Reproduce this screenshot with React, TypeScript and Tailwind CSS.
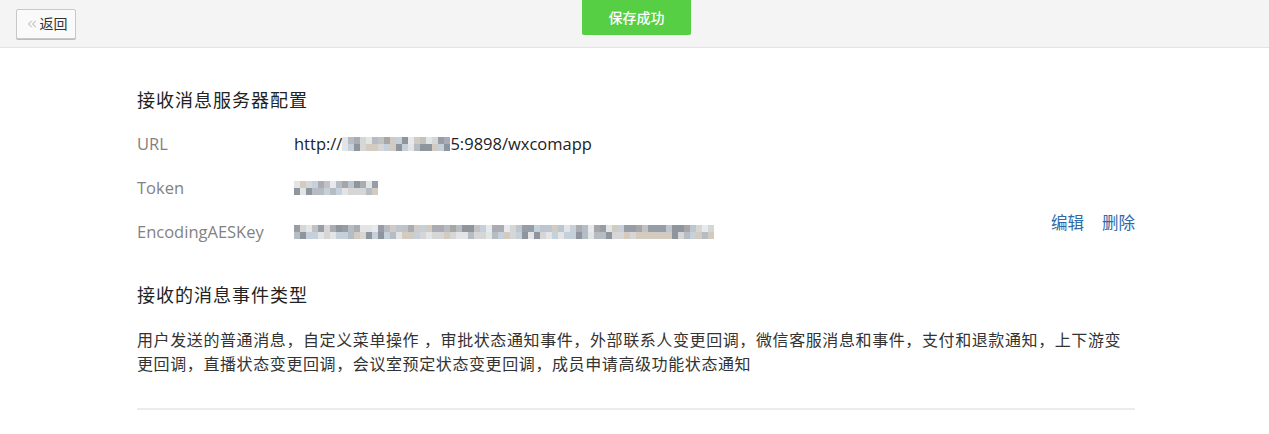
import React from "react";
import { ChevronsLeft } from "lucide-react";

const palette = ["#c2c2c2", "#a9adb3", "#d6d6d6", "#8f959d", "#c6d0da", "#e2e4e6", "#b6bcc3", "#d3cbbf", "#979da6", "#e6e9ed", "#a6a6a6", "#bcc6d1"];

function Mosaic({ cells, seed }: { cells: number; seed: number }) {
  const rows = [0, 1];
  let s = seed;
  const next = () => {
    s = (s * 9301 + 49297) % 233280;
    return s / 233280;
  };
  return (
    <div className="flex flex-col">
      {rows.map((r) => (
        <div key={r} className="flex">
          {Array.from({ length: cells }).map((_, i) => {
            const v = next();
            const col = r === 0 ? palette[Math.floor(v * palette.length)] : palette[Math.floor(v * 6) + 2];
            return <div key={i} className="h-[7px] w-[6px]" style={{ backgroundColor: col }} />;
          })}
        </div>
      ))}
    </div>
  );
}

const cjk = "font-['Open_Sans','Noto_Sans_CJK_SC',sans-serif]";

export default function App() {
  return (
    <div className={`relative h-[434px] w-full overflow-hidden bg-white ${cjk}`}>
      {/* top bar */}
      <div className="flex h-[48px] items-center border-b border-[#dde4eb] bg-[#f4f4f4] pl-[16px]">
        <button className="flex h-[30px] w-[60px] items-center justify-center gap-[1px] rounded-[2px] border border-[#c8c8c8] bg-[#fafafa] text-[14px] text-[#333] shadow-[0_1px_0_#bdbdbd]">
          <ChevronsLeft size={14} strokeWidth={1.2} className="text-[#888]" />
          <span>返回</span>
        </button>
      </div>

      {/* toast */}
      <div className="absolute left-[582px] top-0 flex h-[35px] w-[109px] items-center justify-center rounded-b-[2px] bg-[#56cf44] text-[14px] font-medium text-white">
        保存成功
      </div>

      <div className="ml-[137px] w-[998px] pt-[40px] text-[#222]">
        <h2 className="h-[24px] text-[18px] leading-[24px] tracking-[1px]">接收消息服务器配置</h2>

        <div className="mt-[10px]">
          <div className="flex h-[44px] items-center text-[16.5px]">
            <div className="w-[157px] text-[#828282]">URL</div>
            <div className="flex items-center">
              <span>http://</span>
              <Mosaic cells={18} seed={7} />
              <span>5:9898/wxcomapp</span>
            </div>
          </div>
          <div className="flex h-[44px] items-center text-[16.5px]">
            <div className="w-[157px] text-[#828282]">Token</div>
            <Mosaic cells={14} seed={31} />
          </div>
          <div className="flex h-[44px] items-center text-[16.5px]">
            <div className="w-[157px] text-[#828282]">EncodingAESKey</div>
            <Mosaic cells={70} seed={113} />
            <div className="mb-[18px] ml-auto flex gap-[18px] text-[16.5px] text-[#2f6aa8]">
              <a>编辑</a>
              <a>删除</a>
            </div>
          </div>
        </div>

        <h2 className="mt-[29px] h-[24px] text-[18px] leading-[24px] tracking-[1px]">接收的消息事件类型</h2>

        <p className="mt-[21px] text-[16px] leading-[24px] tracking-[0.6px] text-[#333]">
          用户发送的普通消息，自定义菜单操作 ，审批状态通知事件，外部联系人变更回调，微信客服消息和事件，支付和退款通知，上下游变更回调，直播状态变更回调，会议室预定状态变更回调，成员申请高级功能状态通知
        </p>

        <div className="mt-[32px] h-[2px] bg-[#ececec]" />
      </div>
    </div>
  );
}
